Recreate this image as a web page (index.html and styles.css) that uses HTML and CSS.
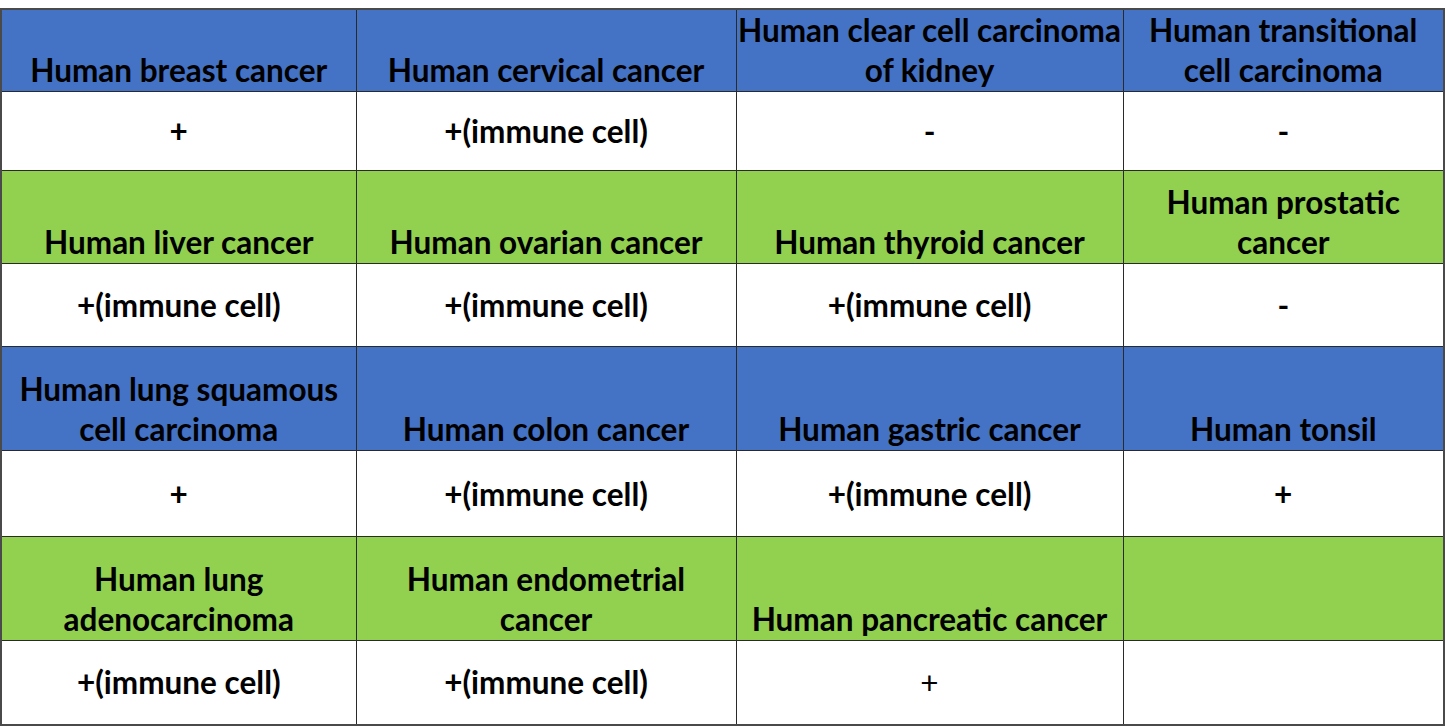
FILE: index.html
```html
<!DOCTYPE html>
<html>
<head>
<meta charset="utf-8">
<link rel="stylesheet" href="styles.css">
</head>
<body>
<table class="grid">
  <colgroup>
    <col class="c1"><col class="c2"><col class="c3"><col class="c4">
  </colgroup>
  <tr class="hd blue r1">
    <td>Human breast cancer</td>
    <td>Human cervical cancer</td>
    <td>Human clear cell carcinoma<br>of kidney</td>
    <td>Human transitional<br>cell carcinoma</td>
  </tr>
  <tr class="dt d1">
    <td>+</td>
    <td>+(immune cell)</td>
    <td>-</td>
    <td>-</td>
  </tr>
  <tr class="hd green r2">
    <td>Human liver cancer</td>
    <td>Human ovarian cancer</td>
    <td>Human thyroid cancer</td>
    <td>Human prostatic<br>cancer</td>
  </tr>
  <tr class="dt d2">
    <td>+(immune cell)</td>
    <td>+(immune cell)</td>
    <td>+(immune cell)</td>
    <td>-</td>
  </tr>
  <tr class="hd blue r3">
    <td>Human lung squamous<br>cell carcinoma</td>
    <td>Human colon cancer</td>
    <td>Human gastric cancer</td>
    <td>Human tonsil</td>
  </tr>
  <tr class="dt d3">
    <td>+</td>
    <td>+(immune cell)</td>
    <td>+(immune cell)</td>
    <td>+</td>
  </tr>
  <tr class="hd green r4">
    <td>Human lung<br>adenocarcinoma</td>
    <td>Human endometrial<br>cancer</td>
    <td>Human pancreatic cancer</td>
    <td></td>
  </tr>
  <tr class="dt d4">
    <td>+(immune cell)</td>
    <td>+(immune cell)</td>
    <td><span class="thin">+</span></td>
    <td></td>
  </tr>
</table>
</body>
</html>
```

FILE: styles.css
```css
html, body {
  margin: 0;
  padding: 0;
  background: #ffffff;
}
body {
  padding-top: 8px;
}
.grid {
  border-collapse: collapse;
  table-layout: fixed;
  width: 1443px;
  border: 2px solid #4a4a4a;
  font-family: "Lato", "Liberation Sans", sans-serif;
  font-weight: 700;
  font-size: 31.5px;
  color: #000;
}
.c1 { width: 355px; }
.c2 { width: 380px; }
.c3 { width: 387px; }
.c4 { width: 321px; }
.grid td {
  border: 1px solid #2a2a2a;
  text-align: center;
  padding: 0;
  line-height: 40px;
  white-space: nowrap;
}
.hd td {
  vertical-align: bottom;
  padding-bottom: 1px;
}
.dt td {
  vertical-align: middle;
}
.blue td { background: #4472c4; }
.green td { background: #92d050; }
.r1 { height: 82px; }
.d1 { height: 79px; }
.r2 { height: 93px; }
.d2 { height: 83px; }
.r3 { height: 104px; }
.d3 { height: 86px; }
.r4 { height: 104px; }
.d4 { height: 84px; }
.thin {
  font-weight: 400;
}
```
